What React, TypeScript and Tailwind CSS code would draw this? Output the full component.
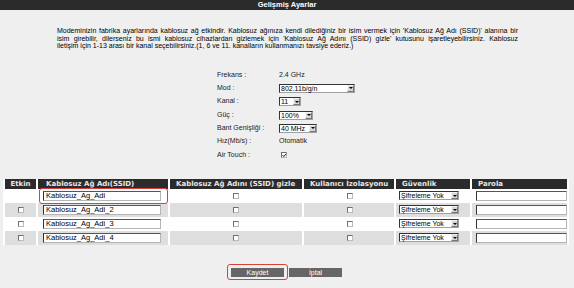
import React from "react";

const rows = [
  { name: "Kablosuz_Ag_Adi", enabled: false, gray: false },
  { name: "Kablosuz_Ag_Adi_2", enabled: true, gray: true },
  { name: "Kablosuz_Ag_Adi_3", enabled: true, gray: false },
  { name: "Kablosuz_Ag_Adi_4", enabled: true, gray: true },
];

const introLines = [
  "Modeminizin fabrika ayarlarında kablosuz ağ etkindir. Kablosuz ağınıza kendi dilediğiniz bir isim vermek için 'Kablosuz Ağ Adı (SSID)' alanına bir",
  "isim girebilir, dilerseniz bu ismi kablosuz cihazlardan gizlemek için 'Kablosuz Ağ Adını (SSID) gizle' kutusunu işaretleyebilirsiniz. Kablosuz",
];

function Checkbox({ checked = false }: { checked?: boolean }) {
  return (
    <div className="w-[6px] h-[6px] border border-[#6f6f6f] border-r-[#bbb] border-b-[#bbb] bg-white relative">
      {checked && (
        <svg viewBox="0 0 6 6" className="absolute left-0 top-0 w-[5px] h-[5px]">
          <path d="M0.8 2.6 L2.2 4.2 L5.2 0.8" stroke="#000" strokeWidth="1.1" fill="none" />
        </svg>
      )}
    </div>
  );
}

function Arrow() {
  return (
    <div className="w-[7px] h-[7px] bg-[#d6d6d6] border border-[#f4f4f4] border-r-[#777] border-b-[#777] flex items-center justify-center shrink-0">
      <div className="w-0 h-0 border-l-[2px] border-r-[2px] border-t-[2px] border-l-transparent border-r-transparent border-t-black" />
    </div>
  );
}

function FakeSelect({ value, className }: { value: string; className: string }) {
  return (
    <div
      className={`flex items-center justify-between h-[9px] bg-white border border-[#a0a0a0] border-t-[#333] border-l-[#333] pl-[1px] ${className}`}
    >
      <span className="text-[7px] leading-[7px] text-black whitespace-nowrap">{value}</span>
      <Arrow />
    </div>
  );
}

function TextBox({ value, className }: { value: string; className: string }) {
  return (
    <div
      className={`h-[10px] bg-white border border-[#b5b5b5] border-t-[#555] border-l-[#333] flex items-center pl-[2px] ${className}`}
    >
      <span className="text-[7.5px] leading-[8px] text-black whitespace-nowrap">{value}</span>
    </div>
  );
}

export default function App() {
  const formRows: { label: string; content: React.ReactNode }[] = [
    { label: "Frekans :", content: <span>2.4 GHz</span> },
    { label: "Mod :", content: <FakeSelect value="802.11b/g/n" className="w-[76px]" /> },
    { label: "Kanal :", content: <FakeSelect value="11" className="w-[22px]" /> },
    { label: "Güç :", content: <FakeSelect value="100%" className="w-[34px]" /> },
    { label: "Bant Genişliği :", content: <FakeSelect value="40 MHz" className="w-[38px]" /> },
    { label: "Hız(Mb/s) :", content: <span>Otomatik</span> },
    {
      label: "Air Touch :",
      content: (
        <div className="pl-[2px]">
          <Checkbox checked />
        </div>
      ),
    },
  ];

  const headCls =
    "bg-[#2b2b2b] text-[#e8e8e8] text-[7px] font-bold text-left pl-[6px] h-[10px] leading-[10px] whitespace-nowrap";

  return (
    <div
      className="w-[574px] h-[288px] overflow-hidden bg-[#efefef] text-black"
      style={{ fontFamily: '"Liberation Sans", Arial, sans-serif' }}
    >
      {/* title bar */}
      <div className="h-[10px] bg-[#2b2b2b] flex items-center justify-center">
        <span className="text-white font-bold text-[7.5px] leading-[8px]">Gelişmiş Ayarlar</span>
      </div>

      {/* description */}
      <div className="pt-[17px] pl-[57px] pr-[56px] text-[7px] leading-[7.5px]">
        {introLines.map((line) => (
          <p key={line} className="text-justify [text-align-last:justify] whitespace-nowrap">
            {line}
          </p>
        ))}
        <p>iletişim için 1-13 arası bir kanal seçebilirsiniz.(1, 6 ve 11. kanalların kullanmanızı tavsiye ederiz.)</p>
      </div>

      {/* radio settings */}
      <div className="pt-[19px] pl-[217px] flex flex-col text-[7px]">
        {formRows.map((r) => (
          <div key={r.label} className="flex items-center h-[13.3px]">
            <div className="w-[62px] text-[#222] whitespace-nowrap">{r.label}</div>
            <div className="text-[#222]">{r.content}</div>
          </div>
        ))}
      </div>

      {/* ssid table */}
      <div className="pt-[17px] pl-[3px]">
        <table
          className="border-separate border-spacing-x-[2px] border-spacing-y-0 bg-white w-[566px] table-fixed"
          style={{ fontFamily: '"DejaVu Sans", Verdana, sans-serif' }}
        >
          <colgroup>
            <col className="w-[31px]" />
            <col className="w-[130px]" />
            <col className="w-[132px]" />
            <col className="w-[90px]" />
            <col className="w-[74px]" />
            <col />
          </colgroup>
          <thead>
            <tr>
              <th className={`${headCls} !text-center !pl-0`}>Etkin</th>
              <th className={`${headCls} !pl-[8px]`}>Kablosuz Ağ Adı(SSID)</th>
              <th className={headCls}>Kablosuz Ağ Adını (SSID) gizle</th>
              <th className={headCls}>Kullanıcı İzolasyonu</th>
              <th className={headCls}>Güvenlik</th>
              <th className={headCls}>Parola</th>
            </tr>
          </thead>
          <tbody style={{ fontFamily: '"Liberation Sans", Arial, sans-serif' }}>
            {rows.map((r, i) => {
              const bg = r.gray ? "bg-[#dedede]" : "bg-white";
              return (
                <tr key={r.name} className="h-[14px]">
                  <td className={`${bg} p-0 h-[14px]`}>
                    <div className="flex justify-center">{r.enabled && <Checkbox />}</div>
                  </td>
                  <td className={`${bg} p-0 h-[14px]`}>
                    <div className="relative ml-[5px] w-[118px]">
                      <TextBox value={r.name} className="w-[118px]" />
                      {i === 0 && (
                        <div className="absolute -left-[4px] -right-[7px] -top-[3px] -bottom-[3px] rounded-[3px] border-[1.5px] border-[#d8403c]" />
                      )}
                    </div>
                  </td>
                  <td className={`${bg} p-0 h-[14px]`}>
                    <div className="flex justify-center">
                      <Checkbox />
                    </div>
                  </td>
                  <td className={`${bg} p-0 h-[14px]`}>
                    <div className="flex justify-center pl-[2px]">
                      <Checkbox />
                    </div>
                  </td>
                  <td className={`${bg} p-0 h-[14px]`}>
                    <FakeSelect value="Şifreleme Yok" className="ml-[3px] w-[60px]" />
                  </td>
                  <td className={`${bg} p-0 h-[14px]`}>
                    <TextBox value="" className="ml-[4px] w-[91px]" />
                  </td>
                </tr>
              );
            })}
          </tbody>
        </table>
      </div>

      {/* actions */}
      <div className="pt-[23px] pl-[231px] flex gap-[5px]">
        <div className="relative">
          <button className="w-[53px] h-[9px] bg-[#666] text-white text-[7px] leading-[9px] block text-center">
            Kaydet
          </button>
          <div className="absolute -left-[4px] -right-[4px] -top-[4px] -bottom-[3px] rounded-[3px] border-[1.5px] border-[#d8403c]" />
        </div>
        <button className="w-[53px] h-[9px] bg-[#666] text-white text-[7px] leading-[9px] block text-center">
          İptal
        </button>
      </div>
    </div>
  );
}
